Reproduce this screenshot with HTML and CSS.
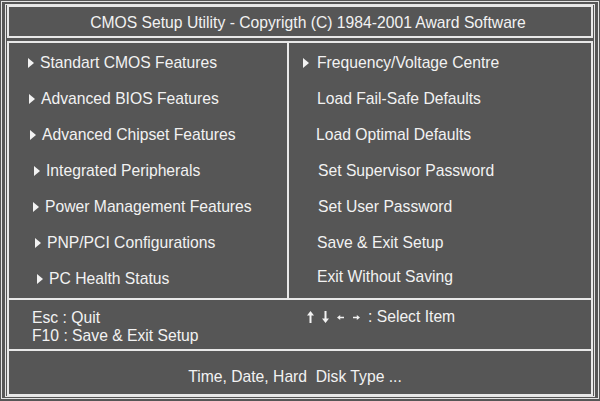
FILE: index.html
```html
<!DOCTYPE html>
<html lang="en">
<head>
<meta charset="utf-8">
<title>CMOS Setup Utility</title>
<link rel="stylesheet" href="styles.css">
</head>
<body>
<div class="frame">
  <div class="inner">
    <header class="title">CMOS Setup Utility - Copyrigth (C) 1984-2001 Award Software</header>
    <main class="main">
      <section class="menu">
        <ul class="col col-left">
          <li class="item"><svg class="tri" viewBox="0 0 6 10"><path d="M0 0L6 5L0 10Z"/></svg>Standart CMOS Features</li>
          <li class="item"><svg class="tri" viewBox="0 0 6 10"><path d="M0 0L6 5L0 10Z"/></svg>Advanced BIOS Features</li>
          <li class="item"><svg class="tri" viewBox="0 0 6 10"><path d="M0 0L6 5L0 10Z"/></svg>Advanced Chipset Features</li>
          <li class="item"><svg class="tri" viewBox="0 0 6 10"><path d="M0 0L6 5L0 10Z"/></svg>Integrated Peripherals</li>
          <li class="item"><svg class="tri" viewBox="0 0 6 10"><path d="M0 0L6 5L0 10Z"/></svg>Power Management Features</li>
          <li class="item"><svg class="tri" viewBox="0 0 6 10"><path d="M0 0L6 5L0 10Z"/></svg>PNP/PCI Configurations</li>
          <li class="item"><svg class="tri" viewBox="0 0 6 10"><path d="M0 0L6 5L0 10Z"/></svg>PC Health Status</li>
        </ul>
        <ul class="col col-right">
          <li class="item has-tri"><svg class="tri" viewBox="0 0 6 10"><path d="M0 0L6 5L0 10Z"/></svg>Frequency/Voltage Centre</li>
          <li class="item">Load Fail-Safe Defaults</li>
          <li class="item">Load Optimal Defaults</li>
          <li class="item">Set Supervisor Password</li>
          <li class="item">Set User Password</li>
          <li class="item">Save &amp; Exit Setup</li>
          <li class="item">Exit Without Saving</li>
        </ul>
      </section>
      <section class="help">
        <div class="help-left">
          <div>Esc : Quit</div>
          <div>F10 : Save &amp; Exit Setup</div>
        </div>
        <div class="help-right">
          <svg class="arr-v" viewBox="0 0 7 12"><path d="M3.5 0L7 4.5H4.5V12H2.5V4.5H0Z"/></svg>
          <svg class="arr-v" viewBox="0 0 7 12"><path d="M3.5 12L7 7.5H4.5V0H2.5V7.5H0Z"/></svg>
          <svg class="arr-h" viewBox="0 0 7 5"><path d="M0 2.5L3.2 0V1.7H7V3.3H3.2V5Z"/></svg>
          <svg class="arr-h" viewBox="0 0 7 5"><path d="M7 2.5L3.8 0V1.7H0V3.3H3.8V5Z"/></svg>
          <span class="sel">: Select Item</span>
        </div>
      </section>
      <footer class="status">Time, Date, Hard&nbsp; Disk Type ...</footer>
    </main>
  </div>
</div>
</body>
</html>
```
FILE: styles.css
```css
* {
  box-sizing: border-box;
}

html, body {
  margin: 0;
  padding: 0;
  background: #565656;
}

body {
  width: 600px;
  height: 401px;
  overflow: hidden;
  font-family: "Liberation Sans", Arial, sans-serif;
  font-size: 15.7px;
  color: #f2f2f2;
}

.frame {
  margin: 1px 0 0 1px;
  width: 598px;
  height: 398px;
  border: 1px solid #e4e4e4;
  padding: 2px 3px 1px 3px;
}

.inner {
  height: 100%;
  border: 1px solid #e4e4e4;
  padding: 0 1px;
  display: flex;
  flex-direction: column;
  gap: 3px;
}

.title {
  height: 33px;
  border: 2px solid #e8e8e8;
  line-height: 29px;
  padding-top: 1px;
  text-align: center;
  padding-left: 16px;
  white-space: nowrap;
}

.main {
  flex: 1;
  border: 2px solid #e8e8e8;
  display: flex;
  flex-direction: column;
}

.menu {
  height: 257px;
  display: grid;
  grid-template-columns: 278px 1fr;
  border-bottom: 2px solid #e8e8e8;
}

.col {
  list-style: none;
  margin: 0;
  padding: 2px 0 0 0;
}

.col-right {
  border-left: 2px solid #e8e8e8;
}

.item {
  height: 36px;
  line-height: 36px;
  display: flex;
  align-items: center;
  white-space: nowrap;
}

.tri {
  width: 6px;
  height: 10px;
  fill: #f2f2f2;
  margin-right: 6px;
  flex: none;
}

.col-left .item:nth-child(1) { padding-left: 19px; }
.col-left .item:nth-child(2) { padding-left: 20px; }
.col-left .item:nth-child(3) { padding-left: 21px; }
.col-left .item:nth-child(4) { padding-left: 25px; }
.col-left .item:nth-child(5) { padding-left: 24px; }
.col-left .item:nth-child(6) { padding-left: 26px; }
.col-left .item:nth-child(7) { padding-left: 28px; }

.col-right .item {
  padding-left: 28px;
}

.col-right .item:nth-child(3) { padding-left: 27px; }
.col-right .item:nth-child(4),
.col-right .item:nth-child(5) { padding-left: 29px; }
.col-right .item:nth-child(7) { line-height: 32px; height: 32px; }

.col-right .item.has-tri {
  padding-left: 14px;
}

.col-right .has-tri .tri {
  margin-right: 8px;
}

.help {
  height: 51px;
  display: grid;
  grid-template-columns: 280px 1fr;
  border-bottom: 2px solid #e8e8e8;
  padding-top: 9px;
}

.help-left {
  padding-left: 23px;
  line-height: 18px;
}

.help-right {
  padding-left: 18px;
  height: 16px;
  display: flex;
  align-items: center;
  gap: 8px;
}

.arr-v {
  width: 7px;
  height: 12px;
  fill: #f2f2f2;
  flex: none;
}

.arr-h {
  width: 7px;
  height: 5px;
  fill: #f2f2f2;
  flex: none;
}

.arr-h + .arr-h {
  margin-left: 1px;
}

.sel {
  line-height: 18px;
  white-space: nowrap;
}

.status {
  flex: 1;
  text-align: center;
  padding-top: 17px;
  padding-right: 10px;
  line-height: 18px;
  white-space: nowrap;
}
```
